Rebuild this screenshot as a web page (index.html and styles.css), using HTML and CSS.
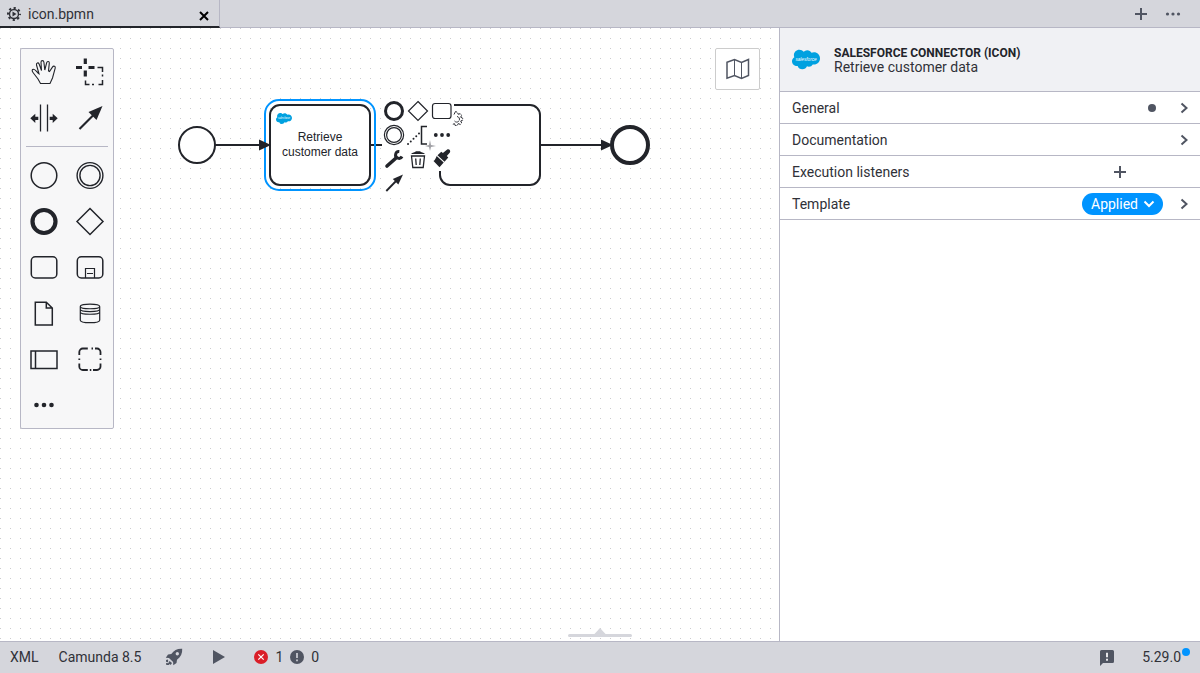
FILE: index.html
```html
<!DOCTYPE html>
<html lang="en">
<head>
<meta charset="utf-8">
<title>icon.bpmn</title>
<link rel="stylesheet" href="styles.css">
</head>
<body>
<div class="app">
  <header class="tabs">
    <div class="tab">
      <svg class="tab-icon" viewBox="0 0 14 14" width="14" height="14"><circle cx="7" cy="7" r="4.500" fill="none" stroke="#303138" stroke-width="1.400"/><circle cx="7" cy="7" r="6" fill="none" stroke="#303138" stroke-width="2" stroke-dasharray="2.200 2.512" stroke-dashoffset="1.100"/><path d="M5.500 4.500 9.500 7 5.500 9.500z" fill="#303138"/></svg>
      <span class="tab-name">icon.bpmn</span>
      <button class="icon-btn tab-close" aria-label="Close tab"><svg viewBox="0 0 10 10" width="10" height="10"><path d="M1 1l8 8M9 1 1 9" stroke="#000" stroke-width="2"/></svg></button>
    </div>
    <div class="tab-actions">
      <button class="icon-btn" aria-label="New tab"><svg viewBox="0 0 12 12" width="12" height="12"><path d="M6 0v12M0 6h12" stroke="#505562" stroke-width="2"/></svg></button>
      <button class="icon-btn" aria-label="More tabs"><svg viewBox="0 0 16 4" width="16" height="4" fill="#505562"><circle cx="2.500" cy="2" r="1.600"/><circle cx="8" cy="2" r="1.600"/><circle cx="13.500" cy="2" r="1.600"/></svg></button>
    </div>
  </header>

  <main class="workspace">
    <section class="canvas" aria-label="Diagram">
      <svg class="diagram" width="100%" height="100%">
        <defs>
          <pattern id="grid" width="10" height="10" patternUnits="userSpaceOnUse"><rect width="1" height="1" fill="#cccccf"/></pattern>
          <symbol id="salesforce" viewBox="0 3 24 18">
            <path fill="#00a1e0" d="M10.006 5.415a4.195 4.195 0 0 1 3.045-1.306c1.56 0 2.954.9 3.69 2.205.63-.3 1.35-.45 2.1-.45 2.85 0 5.159 2.34 5.159 5.22s-2.31 5.22-5.176 5.22c-.345 0-.69-.044-1.02-.104a3.75 3.75 0 0 1-3.3 1.95c-.6 0-1.155-.15-1.65-.375A4.314 4.314 0 0 1 8.88 20.4a4.302 4.302 0 0 1-4.05-2.82c-.27.062-.54.076-.825.076C1.8 17.656 0 15.856 0 13.606c0-1.5.811-2.805 2.01-3.51-.255-.57-.39-1.2-.39-1.846 0-2.58 2.1-4.65 4.65-4.65 1.53 0 2.85.705 3.736 1.815"/>
            <text class="logo-text" x="12" y="13" text-anchor="middle">salesforce</text>
          </symbol>
        </defs>
        <rect width="100%" height="100%" fill="url(#grid)"/>
        <g fill="none" stroke="#22242a" stroke-width="2">
          <path d="M215 117h46M370 117h70M540 117h63"/>
          <circle cx="197" cy="117" r="18" fill="#fff"/>
          <rect x="440" y="77" width="100" height="80" rx="10" fill="#fff"/>
          <circle cx="630" cy="117" r="18" fill="#fff" stroke-width="4"/>
          <rect x="265" y="72" width="110" height="90" rx="14" stroke="#0094ff"/>
          <rect x="270" y="77" width="100" height="80" rx="10" fill="#fff"/>
        </g>
        <path d="M259 111.500 271 117l-12 5.500zM601 111.500 613 117l-12 5.500z" fill="#22242a"/>
        <use href="#salesforce" x="276" y="84" width="16" height="13"/>
        <text class="shape-label" text-anchor="middle"><tspan x="320" y="113">Retrieve</tspan><tspan x="320" y="128">customer data</tspan></text>
      </svg>

      <nav class="palette" aria-label="Tools">
        <button class="tool" aria-label="Hand tool"><svg viewBox="0 0 46 46"><path d="M19.500 34.500 17 30l-5-6.500c-1.500-2-.8-3.300.5-3.300 2 0 3.500 3.300 5.500 4.600L15.500 16c-.5-2.200 1.900-2.800 2.600-1L20.500 21.500 20 13.300c0-2.300 2.700-2.300 2.900 0L23.800 21l1.900-7.300c.5-2 2.900-1.400 2.600.4L27.500 22l1 .5 3.100-4.600c1-1.400 3.200-.5 2.600 1.300L31.500 29 29 34.500z" stroke-width="1.100"/></svg></button>
        <button class="tool" aria-label="Lasso tool"><svg viewBox="0 0 46 46"><path d="M9 18.500h6M21.500 18.500h6M18.300 9.500v5.500M18.300 21.500v6" stroke-width="3.200"/><path d="M30.500 18.500h5v4.500M35.500 25.500v2M35.500 31v4.500h-4M27 35.500h-2M22.500 35.500h-4v-4"/></svg></button>
        <button class="tool" aria-label="Space tool"><svg viewBox="0 0 46 46"><path d="M19.500 9.500v27M26.500 9.500v27" stroke-width="1.300"/><path class="solid" d="m9.300 23.300 5-4.600v3h3v3.200h-3v3zM36.700 23.300 31.700 18.700v3h-3v3.200h3v3z"/></svg></button>
        <button class="tool" aria-label="Connect tool"><svg viewBox="0 0 46 46"><path d="M12.500 34 29 17.500" stroke-width="2.200"/><path class="solid" d="M35.500 11 21.500 17 29.500 25z"/></svg></button>
        <hr class="palette-line">
        <button class="tool" aria-label="Start event"><svg viewBox="0 0 46 46"><circle cx="23" cy="23.500" r="12.800"/></svg></button>
        <button class="tool" aria-label="Intermediate event"><svg viewBox="0 0 46 46"><circle cx="23" cy="23.500" r="12.900" stroke-width="1.400"/><circle cx="23" cy="23.500" r="10.100" stroke-width="1.400"/></svg></button>
        <button class="tool" aria-label="End event"><svg viewBox="0 0 46 46"><circle cx="23" cy="23.500" r="11.500" stroke-width="4.200"/></svg></button>
        <button class="tool" aria-label="Gateway"><svg viewBox="0 0 46 46"><path d="m23 10.500 13 13-13 13-13-13z"/></svg></button>
        <button class="tool" aria-label="Task"><svg viewBox="0 0 46 46"><rect x="10.300" y="12.800" width="25.500" height="21.200" rx="4"/></svg></button>
        <button class="tool" aria-label="Sub-process"><svg viewBox="0 0 46 46"><rect x="10.300" y="12.800" width="25.500" height="21.200" rx="4"/><path d="M18.500 34v-9.500h9V34M20 29.500h6" stroke-width="1.200"/></svg></button>
        <button class="tool" aria-label="Data object"><svg viewBox="0 0 46 46"><path d="M14.300 12.300h11l6 5.700v17h-17zM25.300 12.300v5.700h6"/></svg></button>
        <button class="tool" aria-label="Data store"><svg viewBox="0 0 46 46"><path d="M13.300 16.500v13.700c0 3.300 19.400 3.300 19.400 0V16.500c0-3.200-19.400-3.200-19.400 0 0 3 19.400 3 19.400 0M13.300 19.300c0 3 19.400 3 19.400 0M13.300 22c0 3 19.400 3 19.400 0" stroke-width="1.200"/></svg></button>
        <button class="tool" aria-label="Participant"><svg viewBox="0 0 46 46"><path d="M10 15h26v17.500h-26zM14.500 15v17.500"/></svg></button>
        <button class="tool" aria-label="Group"><svg viewBox="0 0 46 46"><path d="M12.300 19v-3a3.500 3.500 0 0 1 3.500-3.500h5M28 12.500h2a3.500 3.500 0 0 1 3.500 3.500v3M33.500 27.500v3a3.500 3.500 0 0 1-3.500 3.500h-4M20.800 34h-5a3.500 3.500 0 0 1-3.500-3.500V27.500M24.500 12.500h1.500M33.500 22.500V24M22.800 34h1.500M12.300 22.500V24" stroke-width="1.800"/></svg></button>
        <button class="tool" aria-label="More elements"><svg viewBox="0 0 46 46"><g class="solid"><circle cx="15.500" cy="23" r="2.300"/><circle cx="23" cy="23" r="2.300"/><circle cx="30.500" cy="23" r="2.300"/></g></svg></button>
      </nav>

      <div class="context-pad">
        <button class="pad-entry" aria-label="Append end event"><svg viewBox="0 0 24 24"><circle cx="12" cy="12" r="8.500" stroke-width="3"/></svg></button>
        <button class="pad-entry" aria-label="Append gateway"><svg viewBox="0 0 24 24"><path d="m12 2.500 9.500 9.500-9.500 9.500L2.500 12z"/></svg></button>
        <button class="pad-entry" aria-label="Append task"><svg viewBox="0 0 24 24"><rect x="2.500" y="4.500" width="18.500" height="15" rx="2.500"/></svg></button>
        <button class="pad-entry" aria-label="Append intermediate event"><svg viewBox="0 0 24 24"><circle cx="12" cy="12" r="9.600"/><circle cx="12" cy="12" r="7.400"/></svg></button>
        <button class="pad-entry" aria-label="Add annotation"><svg viewBox="0 0 24 24"><path d="M21 3.500h-5.500v17.500H21" stroke-width="1.500"/><path d="M13 10.500 1 22" stroke-width="2" stroke-linecap="round" stroke-dasharray="0 3.800"/></svg></button>
        <button class="pad-entry" aria-label="Append element"><svg viewBox="0 0 24 24"><g class="solid"><circle cx="5.800" cy="12" r="1.900"/><circle cx="12" cy="12" r="1.900"/><circle cx="18.200" cy="12" r="1.900"/></g></svg></button>
        <button class="pad-entry" aria-label="Change element"><svg viewBox="0 0 24 24"><path d="m5 19 8.500-7.500" stroke-width="3.600" stroke-linecap="round"/><path d="M17.300 4.600a3.400 3.400 0 1 0 2.700 4.900" stroke-width="3"/></svg></button>
        <button class="pad-entry" aria-label="Delete"><svg viewBox="0 0 24 24"><path d="M5.500 9h13l-1.300 11.500H6.800zM9.700 11.500l.5 6.500M14.300 11.500l-.5 6.500" stroke-width="1.300"/><path class="solid" d="M5 7c1.500-1.500 4-1.700 5-2.700h4c1 1 3.500 1.200 5 2.700z"/></svg></button>
        <button class="pad-entry" aria-label="Set color"><svg viewBox="0 0 24 24"><path class="solid" d="M17.200 2.600c1.700-1 3.900 1 2.700 2.800L16.800 9l1.500 1.600-3.800 4.200-7-6.500 3.800-3.600 1.600 1.300zM6.700 9l7 6.600-4.200 4.700-6-6.200c1.500-1 2.300-3 3.200-5.100z"/></svg></button>
        <button class="pad-entry" aria-label="Connect"><svg viewBox="0 0 24 24"><path d="M4.300 20 16 8" stroke-width="1.800"/><path class="solid" d="M21 3.500 10.800 8l5.500 5.500z"/></svg></button>
        <svg class="pad-gear" viewBox="0 0 16 20" aria-hidden="true"><path d="M4 5.500 5.500 2.500l2 .8.700 2 2-.6 1.500 1.500-1 2 2 1v2l-2 .8 1 2-1.400 1.500-2-1-1 2H5.200l-.7-1.800-2.300.8M7 7.500a2.800 2.800 0 1 1-2.500 4.500"/></svg>
        <svg class="pad-star" viewBox="0 0 12 12" aria-hidden="true"><path d="M5 0l1 5 5 1-5 1-1 4-1-4-4-1 4-1z"/></svg>
      </div>

      <button class="map-toggle" aria-label="Toggle minimap"><svg viewBox="0 0 24 22" width="24" height="22"><path d="M1 4.300 8.500 1.500l7 3 7-3v16l-7 3-7-3L1 20.200z" fill="none" stroke="#505562" stroke-width="1.500"/><path d="M8.500 1.500v16M15.500 4.500v16" stroke="#505562" stroke-width="1"/></svg></button>
      <button class="panel-handle" aria-label="Open bottom panel"><svg viewBox="0 0 64 9" width="64" height="9" fill="#d5d6dc"><path d="M26 6.500 32 0l6 6.500z"/><rect y="6" width="64" height="3" rx="1.500"/></svg></button>
    </section>

    <aside class="properties">
      <div class="prop-header">
        <svg class="prop-logo" width="30" height="21"><use href="#salesforce" width="30" height="21"/></svg>
        <div>
          <div class="prop-type">SALESFORCE CONNECTOR (ICON)</div>
          <div class="prop-name">Retrieve customer data</div>
        </div>
      </div>
      <div class="group"><button class="group-title">General</button><span class="marker"></span><button class="icon-btn arrow" aria-label="Expand General"><svg viewBox="0 0 8 12" width="8" height="12"><path d="m1.500 1.500 5 4.500-5 4.500"/></svg></button></div>
      <div class="group"><button class="group-title">Documentation</button><button class="icon-btn arrow" aria-label="Expand Documentation"><svg viewBox="0 0 8 12" width="8" height="12"><path d="m1.500 1.500 5 4.500-5 4.500"/></svg></button></div>
      <div class="group"><button class="group-title">Execution listeners</button><button class="icon-btn add" aria-label="Add listener"><svg viewBox="0 0 12 12" width="12" height="12"><path d="M6 0v12M0 6h12" stroke="#505562" stroke-width="2"/></svg></button></div>
      <div class="group"><button class="group-title">Template</button><button class="applied">Applied<svg viewBox="0 0 12 8" width="12" height="8"><path d="m1.500 1.500 4.500 4.500 4.500-4.500" fill="none" stroke="#fff" stroke-width="2"/></svg></button><button class="icon-btn arrow" aria-label="Expand Template"><svg viewBox="0 0 8 12" width="8" height="12"><path d="m1.500 1.500 5 4.500-5 4.500"/></svg></button></div>
    </aside>
  </main>

  <footer class="status">
    <button class="status-btn xml">XML</button>
    <button class="status-btn engine">Camunda 8.5</button>
    <button class="icon-btn rocket" aria-label="Deploy"><svg viewBox="0 0 18 18" width="18" height="18" fill="#505562"><path fill-rule="evenodd" d="M17.200.8C12.500.5 9 2.200 6.300 6L3 6.500.8 9.800l3.200.1L8.100 14l.2 3.200 3.200-2.200.5-3.300C15.800 9 17.500 5.500 17.200.8zM12.300 4a1.700 1.700 0 1 1 0 3.400 1.700 1.700 0 0 1 0-3.400z"/><path d="M3 11.500 1 12l.2 2 2 .3zM4.500 13 3.300 15.300 1 15l.3 2h2.400l1-.9 1 .9 1.300-2z"/></svg></button>
    <button class="icon-btn play" aria-label="Run"><svg viewBox="0 0 12 14" width="12" height="14" fill="#505562"><path d="M0 0l12 7-12 7z"/></svg></button>
    <button class="status-btn problems"><svg viewBox="0 0 14 14" width="14" height="14"><circle cx="7" cy="7" r="7" fill="#da1e28"/><path d="m4.300 4.300 5.400 5.400M9.700 4.300 4.300 9.700" stroke="#fff" stroke-width="1.200"/></svg><span>1</span><svg viewBox="0 0 14 14" width="14" height="14"><circle cx="7" cy="7" r="7" fill="#505562"/><path d="M7 3v5M7 9.500v1.700" stroke="#d5d6dc" stroke-width="1.600"/></svg><span>0</span></button>
    <button class="icon-btn feedback" aria-label="Give feedback"><svg viewBox="0 0 14 16" width="14" height="16"><path d="M1.500 0h11A1.500 1.500 0 0 1 14 1.500v10a1.500 1.500 0 0 1-1.500 1.500H3l-3 3V1.500A1.500 1.500 0 0 1 1.500 0z" fill="#505562"/><path d="M7 2.800v4.400M7 8.700v2" stroke="#e4e5e9" stroke-width="2"/></svg></button>
    <button class="status-btn version">5.29.0<span class="update-dot"></span></button>
  </footer>
</div>
</body>
</html>
```
FILE: styles.css
```css
* { box-sizing: border-box; }
body {
  margin: 0;
  font: 14px/18px Roboto, "Liberation Sans", sans-serif;
  color: #303138;
}
button {
  margin: 0;
  padding: 0;
  border: 0;
  background: none;
  font: inherit;
  color: inherit;
  cursor: pointer;
}
svg { display: block; }
.app { display: flex; flex-direction: column; height: 100vh; }
.icon-btn { display: flex; align-items: center; justify-content: center; }

.tabs {
  display: flex;
  justify-content: space-between;
  height: 28px;
  background: #d5d6dc;
  border-bottom: 1px solid #b7b7c5;
}
.tab {
  display: flex;
  align-items: center;
  width: 220px;
  height: 28px;
  padding: 1px 10px 0 7px;
  border-right: 1px solid #b7b7c5;
  border-bottom: 2px solid #22242a;
}
.tab-name { flex: 1; margin-left: 7px; }
.tab-close { padding-top: 4px; }
.tab-actions { display: flex; align-items: center; gap: 18px; padding-right: 19px; }

.workspace { flex: 1; display: flex; min-height: 0; }
.canvas { flex: 1; position: relative; overflow: hidden; background: #fff; }
.diagram { position: absolute; inset: 0; }
.shape-label { font: 12px "Liberation Sans", Arial, sans-serif; fill: #22242a; }
.logo-text { font: italic 4px "Liberation Sans", Arial, sans-serif; fill: #fff; }

.palette {
  position: absolute;
  left: 20px;
  top: 20px;
  display: grid;
  grid-template-columns: 46px 46px;
  background: #f7f7f8;
  border: 1px solid #b7b7c5;
  border-radius: 2px;
}
.tool { height: 46px; }
.tool svg, .pad-entry svg { width: 100%; height: 100%; fill: none; stroke: #22242a; }
.tool svg { stroke-width: 1.5px; }
.pad-entry svg { stroke-width: 1.2px; }
.tool .solid, .pad-entry .solid { fill: #22242a; stroke: none; }
.palette-line {
  grid-column: 1 / -1;
  width: auto;
  height: 1px;
  margin: 5px;
  border: 0;
  background: #b7b7c5;
}
.context-pad {
  position: absolute;
  left: 382px;
  top: 71px;
  display: grid;
  grid-template-columns: repeat(3, 24px);
}
.pad-entry { height: 24px; background: #fff; }
.pad-gear, .pad-star { position: absolute; }
.pad-gear { left: 68px; top: 10px; width: 16px; height: 20px; fill: none; stroke: #303138; stroke-dasharray: 5 1; }
.pad-star { left: 43px; top: 41px; width: 12px; height: 12px; fill: #a0a0a5; }
.map-toggle {
  position: absolute;
  right: 19px;
  top: 20px;
  display: flex;
  align-items: center;
  justify-content: center;
  width: 45px;
  height: 42px;
  background: #fff;
  border: 1px solid #ccc;
  border-radius: 2px;
}
.panel-handle { position: absolute; left: 568px; bottom: 4px; }

.properties { width: 421px; border-left: 1px solid #b7b7c5; background: #fff; }
.prop-header {
  display: flex;
  align-items: center;
  gap: 13px;
  height: 64px;
  padding: 0 11px;
  background: #f0f1f4;
  border-bottom: 1px solid #b7b7c5;
}
.prop-logo { margin-bottom: 1px; }
.prop-type { padding-top: 1px; font-size: 12px; line-height: 14px; font-weight: 700; color: #22242a; }
.prop-name { line-height: 15px; }
.group {
  display: flex;
  align-items: center;
  height: 32px;
  padding: 0 12px;
  border-bottom: 1px solid #b7b7c5;
}
.group-title { flex: 1; text-align: left; }
.marker { width: 8px; height: 8px; border-radius: 50%; background: #505562; }
.arrow { margin-left: 24px; }
.arrow path { fill: none; stroke: #505562; stroke-width: 2px; }
.applied + .arrow { margin-left: 17px; }
.add { margin-right: 62px; }
.applied {
  display: flex;
  align-items: center;
  gap: 5px;
  height: 22px;
  padding: 0 8px 0 9px;
  border-radius: 11px;
  background: #0094ff;
  color: #fff;
}

.status {
  display: flex;
  align-items: center;
  height: 32px;
  padding: 0 10px 2px;
  background: #d5d6dc;
  border-top: 1px solid #b7b7c5;
}
.engine { margin-left: 20px; }
.rocket { margin-left: 24px; }
.play { margin-left: 30px; }
.problems { display: flex; align-items: center; gap: 7px; margin-left: 29px; }
.feedback { margin-left: auto; padding-top: 2px; }
.version { display: flex; align-items: center; gap: 1px; margin-left: 28px; }
.update-dot { width: 8px; height: 8px; margin-bottom: 10px; border-radius: 50%; background: #0094ff; }
```
